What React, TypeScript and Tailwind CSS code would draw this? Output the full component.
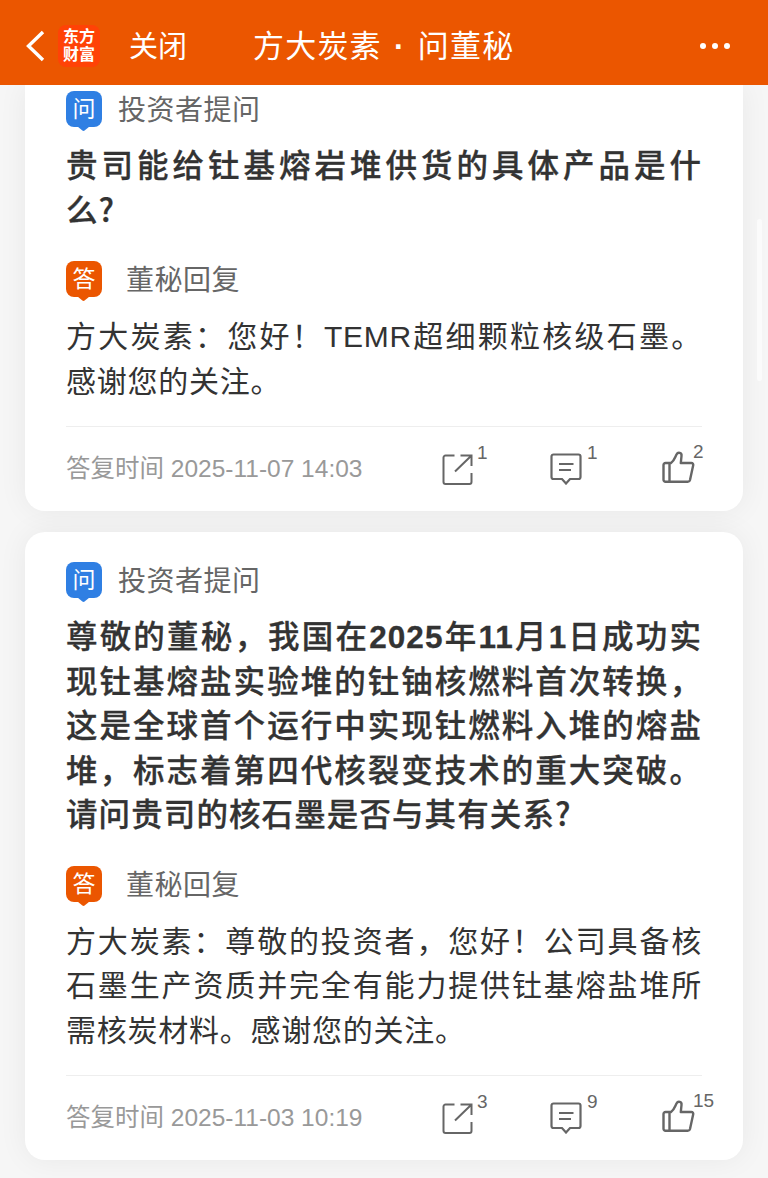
import clsx from 'clsx'

interface QaItem {
  id: string
  question: string[]
  answer: string[]
  time: string
  shares: number
  comments: number
  likes: number
}

const items: QaItem[] = [
  {
    id: 'qa-1',
    question: ['贵司能给钍基熔岩堆供货的具体产品是什', '么?'],
    answer: ['方大炭素：您好！TEMR超细颗粒核级石墨。', '感谢您的关注。'],
    time: '2025-11-07 14:03',
    shares: 1,
    comments: 1,
    likes: 2,
  },
  {
    id: 'qa-2',
    question: [
      '尊敬的董秘，我国在2025年11月1日成功实',
      '现钍基熔盐实验堆的钍铀核燃料首次转换，',
      '这是全球首个运行中实现钍燃料入堆的熔盐',
      '堆，标志着第四代核裂变技术的重大突破。',
      '请问贵司的核石墨是否与其有关系?',
    ],
    answer: [
      '方大炭素：尊敬的投资者，您好！公司具备核',
      '石墨生产资质并完全有能力提供钍基熔盐堆所',
      '需核炭材料。感谢您的关注。',
    ],
    time: '2025-11-03 10:19',
    shares: 3,
    comments: 9,
    likes: 15,
  },
]

export default function App() {
  return (
    <div
      lang="zh-CN"
      className="flex h-[1178px] w-[768px] flex-col overflow-hidden bg-[#f6f6f6] font-['Liberation_Sans','Noto_Sans_CJK_SC',sans-serif]"
    >
      <Header />
      <main className="relative flex flex-1 flex-col gap-[21px] px-[25px]">
        {items.map((item, index) => (
          <QaCard key={item.id} item={item} clipped={index === 0} />
        ))}
        {/* Scrollbar thumb */}
        <div className="absolute top-[134px] right-[6px] h-[162px] w-[5px] rounded-full bg-[#fbfbfb]" />
      </main>
    </div>
  )
}

function Header() {
  return (
    <header className="relative z-10 flex h-[85px] shrink-0 items-center bg-[#eb5600] pt-[7px] text-white">
      <svg className="ml-[24px] h-[34px] w-[22px]" viewBox="0 0 22 34" fill="none" stroke="currentColor" strokeWidth="3.4">
        <path d="M19 3 4.500 17 19 31" />
      </svg>
      <div className="ml-[12px] flex h-[42px] w-[42px] flex-col items-center justify-center rounded-[8px] bg-[#ff4206] text-[16px] leading-[18px] font-bold">
        <span>东方</span>
        <span>财富</span>
      </div>
      <span className="mt-[2px] ml-[29px] text-[29px] leading-[40px]">关闭</span>
      <h1 className="mt-[2px] ml-[66px] flex text-[31px] leading-[40px] tracking-[1.2px]">
        方大炭素
        <span className="w-[36px] text-center font-bold">·</span>
        问董秘
      </h1>
      <div className="mr-[38px] ml-auto flex gap-[6px]">
        <i className="h-[6px] w-[6px] rounded-full bg-white" />
        <i className="h-[6px] w-[6px] rounded-full bg-white" />
        <i className="h-[6px] w-[6px] rounded-full bg-white" />
      </div>
    </header>
  )
}

function QaCard({ item, clipped }: { item: QaItem; clipped: boolean }) {
  return (
    <article
      className={clsx(
        'rounded-b-[20px] bg-white px-[41px] shadow-[0_0_30px_rgba(0,0,0,0.06)]',
        clipped ? 'pt-[6px]' : 'rounded-t-[20px] pt-[30px]'
      )}
    >
      <div className="flex h-[40px] gap-[16px]">
        <Badge text="问" className="text-[#2f7fe3]" />
        <span className="text-[28px] leading-[40px] tracking-[0.5px] text-[#666]">投资者提问</span>
      </div>
      <Lines
        lines={item.question}
        className="mt-[13px] text-[31.5px] font-medium tracking-[1.1px] text-[#333] [-webkit-text-stroke:0.3px_#333]"
      />
      <div className="mt-[28px] flex h-[40px] gap-[24px]">
        <Badge text="答" className="text-[#eb5600]" />
        <span className="text-[28px] leading-[40px] tracking-[0.5px] text-[#666]">董秘回复</span>
      </div>
      <Lines lines={item.answer} className="mt-[14px] text-[30px] tracking-[0.75px] text-[#333]" />
      <footer className="mt-[22px] flex h-[85px] items-center border-t border-[#eee] text-[#666]">
        <span className="w-[375px] shrink-0 text-[24.5px] text-[#999]">答复时间 {item.time}</span>
        <div className="flex w-[109px] shrink-0">
          <ShareIcon />
          <Count value={item.shares} />
        </div>
        <div className="flex w-[111px] shrink-0">
          <CommentIcon />
          <Count value={item.comments} />
        </div>
        <div className="flex shrink-0">
          <LikeIcon />
          <Count value={item.likes} tight />
        </div>
      </footer>
    </article>
  )
}

function Lines({ lines, className }: { lines: string[]; className: string }) {
  return (
    <div className={clsx('w-[636px] leading-[44.5px] whitespace-nowrap', className)}>
      {lines.map((line, index) => (
        <p key={line} className={clsx(index < lines.length - 1 && '[text-align-last:justify]')}>
          {line.split(/(\d+|\?)/).map((part, i) => {
            if (part === '?') {
              return (
                <span key={i} className="font-['Noto_Sans_CJK_SC',sans-serif] leading-[0]">
                  {part}
                </span>
              )
            }
            return /^\d+$/.test(part) ? (
              <span key={i} className="font-bold">
                {part}
              </span>
            ) : (
              part
            )
          })}
        </p>
      ))}
    </div>
  )
}

function Badge({ text, className }: { text: string; className: string }) {
  return (
    <div className={clsx('relative h-[40px] w-[36px]', className)}>
      <svg className="absolute inset-0" width="36" height="40" viewBox="0 0 36 40" fill="currentColor">
        <rect width="36" height="36" rx="8" />
        <path d="M11.5 35.5h12L18.6 39.6q-1.1.8-2.2 0z" />
      </svg>
      <span className="relative block text-center text-[23px] leading-[37px] text-white">{text}</span>
    </div>
  )
}

function Count({ value, tight }: { value: number; tight?: boolean }) {
  return (
    <span className={clsx('-mt-[10px] text-[19px] leading-[20px]', tight ? '-ml-[2px]' : 'ml-[4px]')}>
      {value}
    </span>
  )
}

function ShareIcon() {
  return (
    <svg width="32" height="32" viewBox="0 0 32 32" fill="none" stroke="currentColor" strokeWidth="2">
      <path d="M13.500 2.500H4.500a2 2 0 0 0-2 2v24.500a2 2 0 0 0 2 2h24a2 2 0 0 0 2-2v-9" />
      <path d="M19.500 2.500h11v10.500M30.500 2.500 14 18.500" />
    </svg>
  )
}

function CommentIcon() {
  return (
    <svg width="33" height="32" viewBox="1 0 33 32" fill="none" stroke="currentColor" strokeWidth="2.2">
      <path d="M4.500 1.500h25a2 2 0 0 1 2 2v20.500a2 2 0 0 1-2 2h-8.500L17 30.500l-4-4.500H4.500a2 2 0 0 1-2-2V3.500a2 2 0 0 1 2-2z" />
      <path d="M10 11h14.500M10 17h12" />
    </svg>
  )
}

function LikeIcon() {
  return (
    <svg
      className="-mt-[2px] mb-[2px]"
      width="34"
      height="34"
      viewBox="0 0 34 34"
      fill="none"
      stroke="currentColor"
      strokeWidth="2.400"
      strokeLinejoin="round"
    >
      <path d="M4.500 13h5.500c3-2 4-5.500 5.500-8.500 1.500-3 5.500-2 5 1.500L19.800 13h10.500c1.500 0 2.200 1 1.900 2.300l-3.200 14.700c-.3 1.200-1 1.800-2.200 1.800H4.500a2 2 0 0 1-2-2V15a2 2 0 0 1 2-2zM8.500 13v18.800" />
    </svg>
  )
}
